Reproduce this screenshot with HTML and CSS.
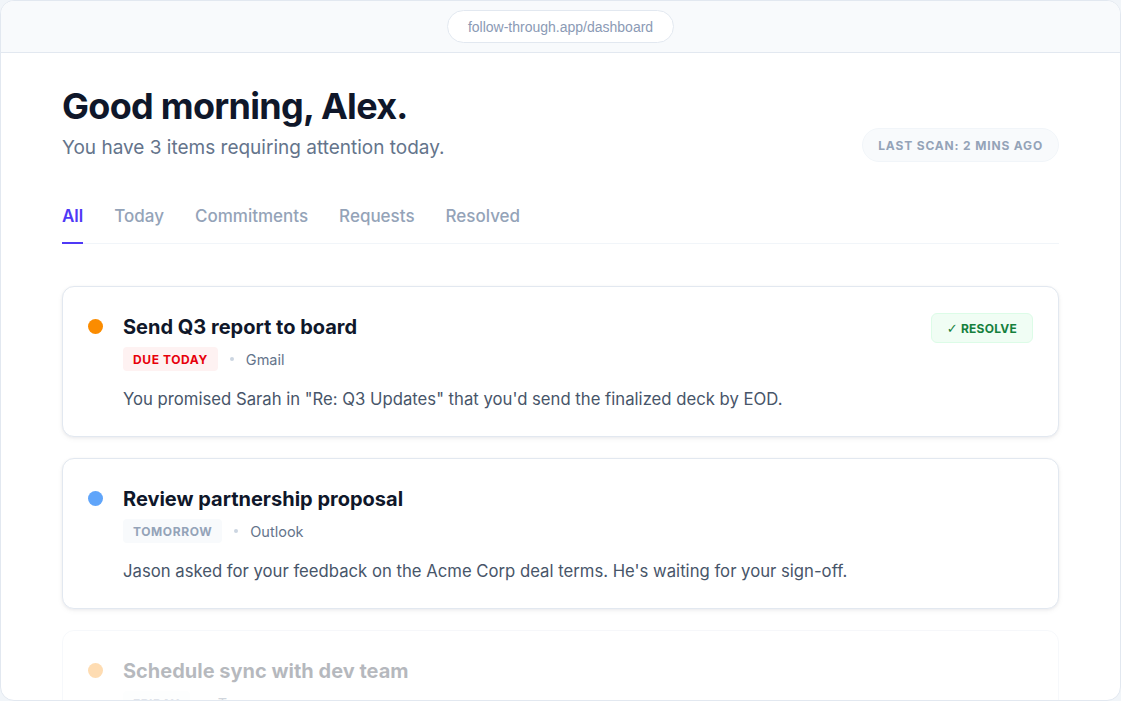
FILE: index.html
```html
<!DOCTYPE html>
<html lang="en">
<head>
  <meta charset="UTF-8">
  <meta name="viewport" content="width=device-width, initial-scale=1.0">
  <title>Follow-through Dashboard</title>
  <link rel="stylesheet" href="styles.css">
</head>
<body>

  <div class="window">
    <!-- Browser chrome -->
    <div class="chrome">
      <div class="url">follow-through.app/dashboard</div>
    </div>

    <div class="main">
      <!-- Greeting -->
      <div class="header">
        <div>
          <h1>Good morning, Alex.</h1>
          <p class="sub">You have 3 items requiring attention today.</p>
        </div>
        <div class="scan">Last scan: 2 mins ago</div>
      </div>

      <!-- Tabs -->
      <div class="tabs">
        <a class="tab active" href="#">All</a>
        <a class="tab" href="#">Today</a>
        <a class="tab" href="#">Commitments</a>
        <a class="tab" href="#">Requests</a>
        <a class="tab" href="#">Resolved</a>
      </div>

      <!-- Items -->
      <div class="list">
        <div class="card">
          <span class="dot orange"></span>
          <div class="body">
            <div class="title">Send Q3 report to board</div>
            <div class="meta">
              <span class="badge red">Due today</span>
              <span class="sep"></span>
              <span class="source">Gmail</span>
            </div>
            <p class="desc">You promised Sarah in "Re: Q3 Updates" that you'd send the finalized deck by EOD.</p>
          </div>
          <button class="resolve"><span class="check">&#10003;</span> Resolve</button>
        </div>

        <div class="card">
          <span class="dot blue"></span>
          <div class="body">
            <div class="title">Review partnership proposal</div>
            <div class="meta">
              <span class="badge grey">Tomorrow</span>
              <span class="sep"></span>
              <span class="source">Outlook</span>
            </div>
            <p class="desc">Jason asked for your feedback on the Acme Corp deal terms. He's waiting for your sign-off.</p>
          </div>
        </div>

        <div class="card faded">
          <span class="dot orange"></span>
          <div class="body">
            <div class="title">Schedule sync with dev team</div>
            <div class="meta">
              <span class="badge grey">Friday</span>
              <span class="sep"></span>
              <span class="source">Teams</span>
            </div>
            <p class="desc">You told Priya you'd set up a time to go over the release plan.</p>
          </div>
        </div>
      </div>
    </div>
  </div>

</body>
</html>
```

FILE: styles.css
```css
* { box-sizing: border-box; }
body { margin: 0; background: #f1f5f9; font-family: Inter, "Noto Sans", sans-serif; }
.window { height: 100vh; background: #fff; border: 1px solid #e2e8f0; border-radius: 14px; overflow: hidden; }

.chrome { height: 52px; background: #f8fafc; border-bottom: 1px solid #e2e8f0; display: flex; align-items: center; justify-content: center; }
.url { height: 33px; padding: 0 20px; display: flex; align-items: center; background: #fff; border: 1px solid #e2e8f0; border-radius: 999px; font-family: "Liberation Sans", Arial, sans-serif; font-size: 14px; color: #8b9ab5; }

.main { padding: 31px 61px 0; }
.header { display: flex; justify-content: space-between; align-items: flex-end; }
h1 { margin: 0; font-size: 36px; line-height: 44px; font-weight: 700; color: #0f172a; letter-spacing: -0.02em; }
.sub { margin: 6px 0 0; font-size: 19px; line-height: 28px; color: #64748b; }
.scan { height: 34px; padding: 0 15px; display: flex; align-items: center; background: #f8fafc; border: 1px solid #f1f5f9; border-radius: 999px; font-size: 12px; font-weight: 700; color: #94a3b8; text-transform: uppercase; letter-spacing: 0.07em; }

.tabs { display: flex; gap: 31px; margin-top: 42px; border-bottom: 1px solid #f1f5f9; }
.tab { padding-bottom: 14px; margin-bottom: -1px; border-bottom: 2px solid transparent; font-size: 17px; line-height: 24px; font-weight: 500; color: #94a3b8; text-decoration: none; }
.tab.active { color: #4f39f6; font-weight: 600; border-bottom-color: #4f39f6; }

.list { display: flex; flex-direction: column; gap: 21px; margin-top: 42px; }
.card { display: flex; align-items: flex-start; gap: 20px; padding: 26px 25px 25px; border: 1px solid #e2e8f0; border-radius: 12px; background: #fff; box-shadow: 0 1px 3px rgba(15, 23, 42, 0.06), 0 2px 6px rgba(15, 23, 42, 0.04); }
.card.faded { opacity: 0.3; box-shadow: none; }
.dot { flex: none; width: 15px; height: 15px; margin-top: 6px; border-radius: 50%; }
.dot.orange { background: #fb8c00; }
.dot.blue { background: #60a5fa; }
.body { flex: 1; }
.title { font-size: 20px; line-height: 28px; font-weight: 700; color: #0f172a; }
.meta { display: flex; align-items: center; gap: 10px; margin-top: 6px; }
.badge { height: 24px; padding: 0 10px; display: flex; align-items: center; border-radius: 4px; font-size: 12px; font-weight: 700; text-transform: uppercase; letter-spacing: 0.05em; }
.badge.red { background: #fef2f2; color: #e7000b; }
.badge.grey { background: #f8fafc; color: #94a3b8; }
.sep { width: 4px; height: 4px; border-radius: 50%; background: #cbd5e1; margin: 0 2px; }
.source { font-size: 14.5px; color: #64748b; }
.desc { margin: 16px 0 0; font-size: 16.7px; line-height: 24px; color: #475569; }
.resolve { flex: none; height: 30px; padding: 0 15px; background: #f0fdf4; border: 1px solid #dcfce7; border-radius: 6px; font-family: inherit; font-size: 12px; font-weight: 700; color: #15803d; text-transform: uppercase; letter-spacing: 0.02em; cursor: pointer; }
.check { font-family: "DejaVu Sans", sans-serif; font-size: 13px; font-weight: 700; }
```
